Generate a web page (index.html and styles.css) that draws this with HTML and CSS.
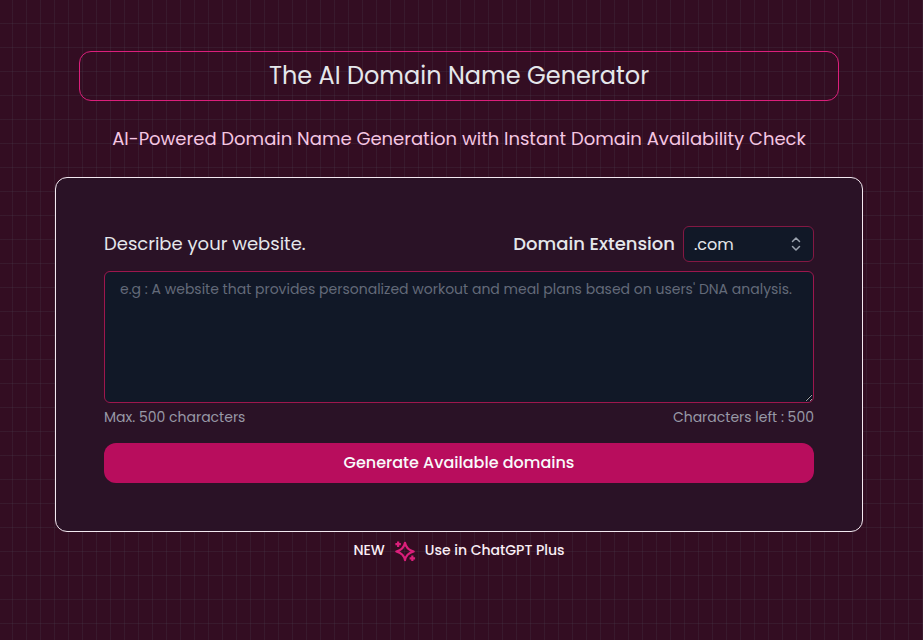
FILE: index.html
```html
<!DOCTYPE html>
<html lang="en">
<head>
    <meta charset="UTF-8">
    <meta name="viewport" content="width=device-width, initial-scale=1.0">
    <title>The AI Domain Name Generator</title>
    <link rel="stylesheet" href="styles.css">
</head>
<body>
    <main class="page">
        <h1 class="title">The AI Domain Name Generator</h1>
        <h2 class="subtitle">AI-Powered Domain Name Generation with Instant Domain Availability Check</h2>

        <form class="card">
            <div class="card-header">
                <label class="describe" for="description">Describe your website.</label>
                <div class="extension">
                    <label class="extension-label" for="extension">Domain Extension</label>
                    <div class="select-wrap">
                        <select id="extension" class="select">
                            <option>.com</option>
                            <option>.net</option>
                            <option>.org</option>
                            <option>.io</option>
                        </select>
                        <svg class="select-icon" viewBox="0 0 20 20" fill="none" stroke="currentColor" stroke-width="1.5" stroke-linecap="round" stroke-linejoin="round" aria-hidden="true">
                            <path d="M6.5 7.5 10 4l3.500 3.500M6.500 12.500 10 16l3.500-3.500"/>
                        </svg>
                    </div>
                </div>
            </div>
            <textarea id="description" class="description" maxlength="500" placeholder="e.g : A website that provides personalized workout and meal plans based on users' DNA analysis."></textarea>
            <div class="counter">
                <span>Max. 500 characters</span>
                <span>Characters left : 500</span>
            </div>
            <button type="button" class="generate">Generate Available domains</button>
        </form>

        <a class="promo" href="#">
            <span>NEW</span>
            <svg class="sparkles" viewBox="0 0 24 24" fill="none" stroke="currentColor" stroke-width="2.4" stroke-linejoin="round" aria-hidden="true">
                <path d="M12 3c1 5.500 3.500 8 9.500 9.500-6 1.500-8.500 4-9.500 9.500-1-5.500-3.500-8-9.500-9.500 6-1.500 8.500-4 9.500-9.500Z"/>
                <path d="M4.500 1.500v6M1.500 4.500h6M20 17v6M17 20h6"/>
            </svg>
            <span>Use in ChatGPT Plus</span>
        </a>
    </main>
</body>
</html>
```
FILE: styles.css
```css
* {
    box-sizing: border-box;
}
body {
    margin: 0;
    min-height: 100vh;
    font-family: Poppins, Inter, "Open Sans", sans-serif;
    color: #e5e7eb;
    background-color: #330d22;
    background-image:
        linear-gradient(to right, rgba(79, 79, 90, 0.2) 1px, transparent 1px),
        linear-gradient(to bottom, rgba(79, 79, 90, 0.2) 1px, transparent 1px);
    background-size: 14px 24px;
    background-position: -2px -1px;
}
.page {
    display: flex;
    flex-direction: column;
    align-items: center;
    padding: 51px 60px 48px 55px;
}
.title {
    width: 100%;
    max-width: 760px;
    margin: 0 0 24px;
    padding: 8px;
    border: 1px solid #db1f7b;
    border-radius: 12px;
    font-size: 24px;
    line-height: 32px;
    font-weight: 400;
    text-align: center;
}
.subtitle {
    margin: 0 0 24px;
    color: #f5c6e2;
    font-size: 18px;
    line-height: 28px;
    font-weight: 400;
    text-align: center;
}
.card {
    width: 100%;
    max-width: 808px;
    padding: 48px;
    border: 1px solid #f3e8f0;
    border-radius: 12px;
    background: #2a1226;
}
.card-header {
    display: flex;
    flex-wrap: wrap;
    justify-content: space-between;
    align-items: center;
    gap: 8px;
    margin-bottom: 9px;
}
.describe,
.extension-label {
    font-size: 18px;
    line-height: 28px;
}
.extension-label {
    font-weight: 500;
}
.extension {
    display: flex;
    align-items: center;
    gap: 8px;
}
.select-wrap {
    position: relative;
    width: 131px;
}
.select {
    display: block;
    width: 100%;
    height: 36px;
    padding: 0 32px 0 10px;
    appearance: none;
    border: 1px solid #831843;
    border-radius: 6px;
    background: #111827;
    color: #e5e7eb;
    font-family: inherit;
    font-size: 16px;
}
.select-icon {
    position: absolute;
    top: 8px;
    right: 8px;
    width: 20px;
    height: 20px;
    color: #9ca3af;
    pointer-events: none;
}
.description {
    display: block;
    width: 100%;
    height: 132px;
    padding: 5px 15px;
    border: 1px solid #9d174d;
    border-radius: 6px;
    background: #111827;
    color: #e5e7eb;
    font-family: inherit;
    font-size: 14px;
    line-height: 24px;
}
.description::placeholder {
    color: #636a79;
}
.counter {
    display: flex;
    justify-content: space-between;
    margin: 4px 0 16px;
    color: #9899a6;
    font-size: 14px;
    line-height: 20px;
}
.generate {
    display: block;
    width: 100%;
    height: 40px;
    padding: 0 8px 2px;
    border: 0;
    border-radius: 12px;
    background: #b80d5d;
    color: #f9fafb;
    font-family: inherit;
    font-size: 16px;
    font-weight: 500;
}
.promo {
    display: flex;
    align-items: center;
    gap: 9px;
    margin-top: 6px;
    color: #f9eef5;
    font-size: 14px;
    line-height: 24px;
    font-weight: 500;
    text-decoration: none;
}
.sparkles {
    width: 22px;
    height: 22px;
    margin-top: 2px;
    color: #db1f7b;
}
```
